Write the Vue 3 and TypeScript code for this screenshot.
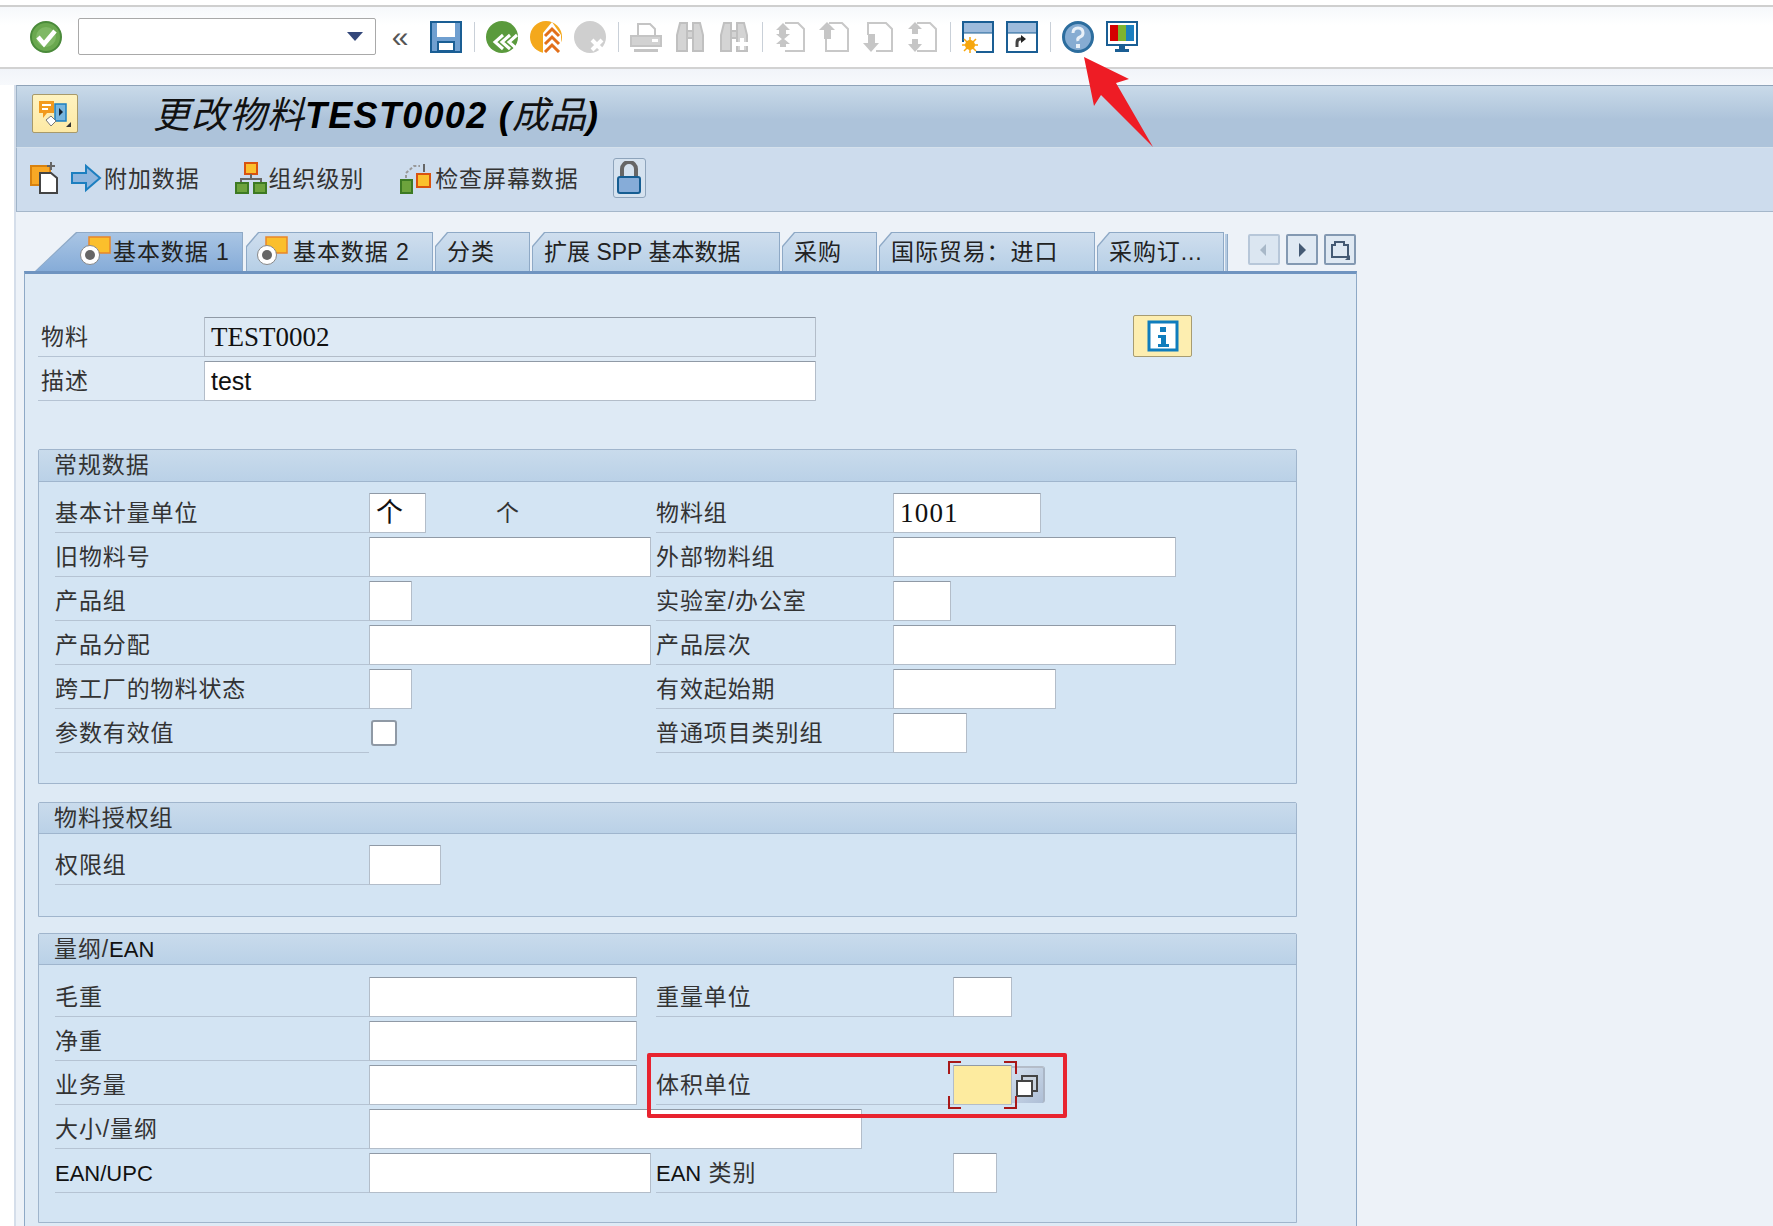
<script setup lang="ts">
interface Tab { text: string; width: number; icon?: boolean; active?: boolean; tight?: boolean }
const tabs: Tab[] = [
  { text: '基本数据 1', width: 208, icon: true, active: true },
  { text: '基本数据 2', width: 187, icon: true },
  { text: '分类', width: 95 },
  { text: '扩展 SPP 基本数据', width: 248, tight: true },
  { text: '采购', width: 95 },
  { text: '国际贸易：进口', width: 216 },
  { text: '采购订...', width: 127 },
]
interface Row { label: string; w: number; value?: string; rlabel: string; rw: number; rvalue?: string; extra?: string; check?: boolean }
const generalRows: Row[] = [
  { label: '基本计量单位', w: 57, value: '个', extra: '个', rlabel: '物料组', rw: 148, rvalue: '1001' },
  { label: '旧物料号', w: 282, rlabel: '外部物料组', rw: 283 },
  { label: '产品组', w: 43, rlabel: '实验室/办公室', rw: 58 },
  { label: '产品分配', w: 282, rlabel: '产品层次', rw: 283 },
  { label: '跨工厂的物料状态', w: 43, rlabel: '有效起始期', rw: 163 },
  { label: '参数有效值', w: 0, check: true, rlabel: '普通项目类别组', rw: 74 },
]
</script>

<template>
  <div class="page">
    <header class="sysbar">
      <svg class="ic" viewBox="0 0 32 32"><circle cx="16" cy="16" r="15" fill="#6aa84f" stroke="#4a8a3a" stroke-width="2"/><circle cx="16" cy="16" r="10" fill="#7fb865"/><path d="M8 16l6 7 11-13" fill="none" stroke="#fff" stroke-width="4.5"/></svg>
      <div class="combo"><span class="combo-arrow"></span></div>
      <span class="chev">«</span>
      <svg class="ic" viewBox="0 0 32 32"><rect x="1" y="1" width="30" height="30" fill="#6f9fd0" stroke="#1a5e94" stroke-width="2"/><rect x="7" y="2" width="18" height="14" fill="#fff"/><rect x="8" y="21" width="16" height="9" fill="#fff" stroke="#1a5e94" stroke-width="2"/></svg>
      <i class="sep"></i>
      <svg class="ic" viewBox="0 0 32 32"><circle cx="16" cy="16" r="16" fill="#5a9a3c"/><path d="M31 14l-8 7 8 7M24 14l-8 7 8 7M17 14l-8 7 8 7" fill="none" stroke="#fff" stroke-width="3"/></svg>
      <svg class="ic" viewBox="0 0 32 32"><circle cx="16" cy="16" r="16" fill="#f4a81c"/><path d="M22 1l9 13v18H13V12z" fill="#fff"/><path d="M15 15l7-7 7 7M15 23l7-7 7 7M15 31l7-7 7 7" fill="none" stroke="#e2701a" stroke-width="3"/></svg>
      <svg class="ic" viewBox="0 0 32 32"><circle cx="16" cy="16" r="16" fill="#cfcfcf"/><path d="M18 19l10 10M28 19L18 29" stroke="#fff" stroke-width="4"/></svg>
      <i class="sep"></i>
      <svg class="ic" viewBox="0 0 32 32" fill="none" stroke="#c4c4c4" stroke-width="2"><path d="M8 14V3h12l5 5v6"/><rect x="1" y="15" width="30" height="10" fill="#d2d2d2"/><rect x="22" y="18" width="6" height="3" fill="#fff" stroke="none"/><rect x="4" y="28" width="24" height="3" fill="#c4c4c4" stroke="none"/></svg>
      <svg class="ic" viewBox="0 0 32 32" fill="#d4d4d4" stroke="#c0c0c0" stroke-width="2"><path d="M6 2h7v28H3V14zM19 2h7l3 12v16H19z"/><rect x="13" y="10" width="6" height="7"/></svg>
      <svg class="ic" viewBox="0 0 32 32" fill="#d4d4d4" stroke="#c0c0c0" stroke-width="2"><path d="M6 2h7v28H3V14zM19 2h7l3 12v16H19z"/><rect x="13" y="10" width="6" height="7"/><path d="M24 17v12M18 23h12" stroke="#fff" stroke-width="4"/></svg>
      <i class="sep"></i>
      <svg class="ic" viewBox="0 0 32 32"><path d="M11 2h13l6 6v22H11" fill="#fff" stroke="#c8c8c8" stroke-width="2"/><path d="M9 2l7 7h-4v4h4l-7 6-7-6h3V9H2zM9 17l7 6h-4v3h-6v-3H2z" fill="#c6c6c6"/></svg>
      <svg class="ic" viewBox="0 0 32 32"><path d="M11 2h13l6 6v22H8V18" fill="#fff" stroke="#c8c8c8" stroke-width="2"/><path d="M9 1l8 8h-4v9H6V9H1z" fill="#c6c6c6"/></svg>
      <svg class="ic" viewBox="0 0 32 32"><path d="M6 14V2h18l6 6v22H14" fill="#fff" stroke="#c8c8c8" stroke-width="2"/><path d="M6 13h7v9h4l-8 9-8-9h5z" fill="#c6c6c6"/></svg>
      <svg class="ic" viewBox="0 0 32 32"><path d="M11 2h13l6 6v22H11" fill="#fff" stroke="#c8c8c8" stroke-width="2"/><path d="M9 1l7 7h-4v5H6V8H2zM6 18h6v5h4l-7 8-7-8h4z" fill="#c6c6c6"/></svg>
      <i class="sep"></i>
      <svg class="ic" viewBox="0 0 32 32"><rect x="1" y="1" width="30" height="30" fill="#fff"/><rect x="1" y="1" width="30" height="11" fill="#9dbbdc"/><path d="M14 31h17V1H1v20" fill="none" stroke="#1a5e94" stroke-width="2"/><path d="M1 12h30" stroke="#1a5e94"/><circle cx="8" cy="24" r="5" fill="#f7a70d"/><path d="M8 16v16M0 24h16M2 18l12 12M14 18L2 30" stroke="#f7a70d" stroke-width="1.5"/></svg>
      <svg class="ic" viewBox="0 0 32 32"><rect x="1" y="1" width="30" height="30" fill="#fff" stroke="#1a5e94" stroke-width="2"/><rect x="2" y="2" width="28" height="10" fill="#9dbbdc"/><path d="M1 12h30" stroke="#1a5e94"/><path d="M11 26v-4q0-4 3-4h2" fill="none" stroke="#444" stroke-width="3"/><path d="M15 14l5 4-5 4z" fill="#222"/></svg>
      <i class="sep"></i>
      <svg class="ic" viewBox="0 0 32 32"><circle cx="16" cy="16" r="14.5" fill="#86acd2" stroke="#2c6d9e" stroke-width="3"/><path d="M11 12q0-5 5-5t5 5q0 3-3 4t-2 4" fill="none" stroke="#e8f0f8" stroke-width="3"/><rect x="14" y="23" width="4" height="4" fill="#e8f0f8"/></svg>
      <svg class="ic" viewBox="0 0 32 32"><rect x="1" y="1" width="30" height="23" fill="#fff" stroke="#1a5e94" stroke-width="2"/><rect x="4" y="4" width="8" height="16" fill="#d40000"/><rect x="12" y="4" width="8" height="16" fill="#7eb32f"/><rect x="20" y="4" width="8" height="16" fill="#1c7fc0"/><path d="M13 25h6v3h4v3H9v-3h4z" fill="#1a5e94"/></svg>
    </header>
    <div class="strip"></div>

    <main class="content">
      <section class="titlebar">
        <div class="title-btn">
          <svg viewBox="0 0 34 30" width="34" height="30"><path d="M1 2h15v12h-7l-4 5v-5H1z" fill="#f29a1e"/><path d="M4 6h9M4 10h6" stroke="#fff" stroke-width="2"/><rect x="17" y="5" width="11" height="17" fill="#77b5de" stroke="#1c7fc0" stroke-width="1.5"/><path d="M21 9l4 4-4 4z" fill="#123"/><path d="M8 21l5-4 5 5-5 5z" fill="#fff" stroke="#777"/><path d="M28 28h5v-5z" fill="#333"/></svg>
        </div>
        <h1 class="title"><span class="title-cjk">更改物料</span><span class="title-lat">TEST0002 (</span><span class="title-cjk tight">成品</span><span class="title-lat">)</span></h1>
      </section>

      <nav class="appbar">
        <svg class="ic ic-a" viewBox="0 0 30 32"><rect x="1" y="4" width="19" height="19" fill="#f9a825" stroke="#d9820f" stroke-width="2"/><path d="M10 11h11l6 5v15H10z" fill="#fff" stroke="#444" stroke-width="2"/><path d="M21 0v8M17 4h8" stroke="#666" stroke-width="2"/></svg>
        <svg class="ic ic-b" viewBox="0 0 30 32"><path d="M1 11h14V4l14 12-14 12v-7H1z" fill="#8fb5dd" stroke="#1c7fc0" stroke-width="2"/></svg>
        <span class="btn-text">附加数据</span>
        <svg class="ic ic-c" viewBox="0 0 32 32"><rect x="10" y="1" width="12" height="11" fill="#fbc02d" stroke="#d9530f" stroke-width="2"/><path d="M16 12v5M6 21v-4h20v4" fill="none" stroke="#666" stroke-width="2"/><rect x="1" y="21" width="12" height="10" fill="#6da33c" stroke="#3d7a23" stroke-width="2"/><rect x="19" y="21" width="12" height="10" fill="#6da33c" stroke="#3d7a23" stroke-width="2"/></svg>
        <span class="btn-text">组织级别</span>
        <svg class="ic ic-d" viewBox="0 0 32 32"><rect x="1" y="18" width="11" height="13" fill="#6da33c" stroke="#3d7a23" stroke-width="2"/><rect x="17" y="12" width="13" height="13" fill="#fbc02d" stroke="#d9530f" stroke-width="2"/><path d="M6 16v-5l8-7h6" fill="none" stroke="#999" stroke-width="2" stroke-dasharray="3 2"/><path d="M24 10V2" stroke="#666" stroke-width="2"/></svg>
        <span class="btn-text t3">检查屏幕数据</span>
        <button class="lock-btn" type="button">
          <svg viewBox="0 0 26 34" width="26" height="34"><path d="M6 16V8a7 7 0 0 1 14 0v8" fill="none" stroke="#666" stroke-width="4"/><rect x="2" y="16" width="22" height="16" rx="2" fill="#86acd8" stroke="#155d92" stroke-width="2"/></svg>
        </button>
      </nav>

      <section class="tabzone">
        <div class="tabstrip">
          <div v-for="t in tabs" :key="t.text" class="tab" :class="{ active: t.active, plain: !t.icon, tight: t.tight }" :style="{ width: t.width + 'px' }">
            <svg v-if="t.icon" class="tab-ic" viewBox="0 0 31 30" width="31" height="30"><rect x="9" y="1" width="21" height="16" fill="#fbbf2c" stroke="#e9862a" stroke-width="1.5"/><circle cx="10" cy="19" r="9.5" fill="#fff" stroke="#888"/><circle cx="10" cy="19" r="5" fill="#666"/></svg>
            <span class="tab-text">{{ t.text }}</span>
          </div>
          <i class="tab-stack"></i>
          <div class="tabnav">
            <button class="navbtn off" type="button"><svg viewBox="0 0 26 26" width="26" height="26"><path d="M15 7l-6 6 6 6z" fill="#a8b8c8"/></svg></button>
            <button class="navbtn" type="button"><svg viewBox="0 0 26 26" width="26" height="26"><path d="M10 6l7 7-7 7z" fill="#445a74"/></svg></button>
            <button class="navbtn" type="button"><svg viewBox="0 0 26 26" width="26" height="26"><path d="M5 8h3V5h9v3h4v12H5z" fill="none" stroke="#445a74" stroke-width="2"/><path d="M23 18v5h-5z" fill="#445a74"/></svg></button>
          </div>
        </div>

        <div class="panel">
          <div class="head-block">
            <div class="head-rows">
              <div class="hrow"><span class="hlabel">物料</span><div class="field ro ser wide">TEST0002</div></div>
              <div class="hrow"><span class="hlabel">描述</span><div class="field sans wide">test</div></div>
            </div>
            <button class="info" type="button"><svg viewBox="0 0 32 32" width="32" height="32"><rect x="2" y="2" width="28" height="28" fill="#fff" stroke="#0f7dbd" stroke-width="3"/><rect x="13" y="7" width="6" height="5" fill="#0f7dbd"/><path d="M11 15h8v9h3v3H11v-3h3v-6h-3z" fill="#0f7dbd"/></svg></button>
          </div>

          <section class="group g1">
            <h2 class="ghead">常规数据</h2>
            <div class="gbody">
              <div v-for="r in generalRows" :key="r.label" class="row">
                <div class="lcell">
                  <span class="label">{{ r.label }}</span>
                  <span v-if="r.check" class="check"></span>
                  <div v-else class="field" :class="{ big: r.value }" :style="{ width: r.w + 'px' }">{{ r.value }}</div>
                  <span v-if="r.extra" class="extra">{{ r.extra }}</span>
                </div>
                <div class="rcell">
                  <span class="label rlabel">{{ r.rlabel }}</span>
                  <div class="field ser num" :style="{ width: r.rw + 'px' }">{{ r.rvalue }}</div>
                </div>
              </div>
            </div>
          </section>

          <section class="group g2">
            <h2 class="ghead">物料授权组</h2>
            <div class="gbody">
              <div class="row"><div class="lcell"><span class="label">权限组</span><div class="field w72"></div></div></div>
            </div>
          </section>

          <section class="group g3">
            <h2 class="ghead">量纲/<span class="lat">EAN</span></h2>
            <div class="gbody">
              <div class="row">
                <div class="lcell"><span class="label">毛重</span><div class="field w268"></div></div>
                <div class="rcell"><span class="label rlabel2">重量单位</span><div class="field w59"></div></div>
              </div>
              <div class="row"><div class="lcell"><span class="label">净重</span><div class="field w268"></div></div></div>
              <div class="row">
                <div class="lcell"><span class="label">业务量</span><div class="field w268"></div></div>
                <div class="rcell"><span class="label rlabel2">体积单位</span>
                  <div class="focus">
                    <div class="field yellow"></div>
                    <i class="br tl"></i><i class="br tr"></i><i class="br bl"></i><i class="br brr"></i>
                  </div>
                  <div class="f4"><svg viewBox="0 0 24 24" width="24" height="24"><rect x="7" y="2" width="15" height="15" fill="#c8d2de" stroke="#444" stroke-width="2"/><rect x="2" y="7" width="15" height="15" fill="#fff" stroke="#444" stroke-width="2"/></svg></div>
                </div>
              </div>
              <div class="row"><div class="lcell"><span class="label">大小/量纲</span><div class="field w493"></div></div></div>
              <div class="row">
                <div class="lcell"><span class="label"><span class="lat">EAN/UPC</span></span><div class="field w282"></div></div>
                <div class="rcell"><span class="label rlabel2"><span class="lat">EAN</span> 类别</span><div class="field w44"></div></div>
              </div>
            </div>
          </section>
        </div>
      </section>
    </main>

    <div class="redbox"></div>
    <svg class="arrow" viewBox="0 0 1773 1226" width="1773" height="1226"><path d="M1084 57L1129 79 1116 83 1153 147 1101 95 1094 106z" fill="#ee1c25"/></svg>
  </div>
</template>

<style scoped>
.page {
  position: relative;
  width: 1773px;
  height: 1226px;
  overflow: hidden;
  background: #fff;
  color: #333;
  font-family: "Liberation Sans", "Noto Sans CJK SC", sans-serif;
  font-size: 23px;
}
.ic { width: 32px; height: 32px; flex: none; }
.sysbar {
  margin-top: 5px;
  height: 60px;
  box-sizing: content-box;
  border-top: 2px solid #cfcfcf;
  border-bottom: 2px solid #d2d2d2;
  background: linear-gradient(#f6f8fb, #fff 30%);
  display: flex;
  align-items: center;
  padding-left: 30px;
  gap: 12px;
}
.combo {
  width: 296px;
  height: 35px;
  margin-left: 4px;
  margin-top: -1px;
  background: #fff;
  border: 1px solid #a9a9a9;
  border-radius: 2px;
  position: relative;
}
.combo-arrow {
  position: absolute;
  right: 12px;
  top: 13px;
  border: 8px solid transparent;
  border-top: 9px solid #33477a;
  border-bottom: 0;
}
.chev { width: 26px; margin: 0 5px 0 -1px; text-align: center; font-size: 30px; line-height: 30px; color: #555; }
.sep { width: 1px; height: 30px; background: #c9d0d8; margin: 0 -1px 0 0; flex: none; }
.strip { height: 16px; background: linear-gradient(#f1f4f9, #f7f9fc); }

.content {
  margin-left: 14px;
  background: #edf2f8;
  border-left: 2px solid #d5deea;
  height: 1144px;
}
.titlebar {
  height: 61px;
  border-top: 1px solid #8fa3b8;
  background: linear-gradient(#c9dae9, #adc3da 55%);
  border-bottom: 1px solid #d5e1ec;
  display: flex;
  align-items: center;
  padding-left: 15px;
  border-left: 1px solid #9fb3c8;
}
.title-btn {
  width: 44px;
  height: 37px;
  border: 1px solid #a89a6a;
  border-radius: 2px;
  background: linear-gradient(#fff3c0, #fde9a5);
  display: flex;
  align-items: center;
  justify-content: center;
  margin-top: -6px;
}
.title {
  margin: -1px 0 0 75px;
  font-size: 37px;
  font-weight: 400;
  font-style: italic;
  color: #111;
  line-height: 50px;
  white-space: nowrap;
}
.title-cjk { letter-spacing: 1px; }
.title-cjk.tight { letter-spacing: 0; }
.title-lat { font-weight: 700; color: #000; font-size: 36px; letter-spacing: 1.3px; }

.appbar {
  height: 64px;
  padding-bottom: 4px;
  box-sizing: border-box;
  background: #cddced;
  border-bottom: 1px solid #a5b7ca;
  border-left: 1px solid #9fb3c8;
  display: flex;
  align-items: center;
}
.ic-a { margin-left: 12px; }
.ic-b { margin-left: 9px; }
.ic-c { margin-left: 35px; }
.ic-d { margin-left: 36px; }
.btn-text { margin: -2px 0 0 2px; letter-spacing: 0.9px; white-space: nowrap; }
.t3 { margin-left: 3px; }
.lock-btn {
  margin-left: 34px;
  width: 33px;
  height: 40px;
  padding: 0;
  border: 1px solid #8ea4bb;
  border-radius: 3px;
  background: #d5e2ef;
  display: flex;
  align-items: center;
  justify-content: center;
}

.tabzone { padding: 20px 0 0 7px; }
.tabstrip {
  display: flex;
  align-items: flex-end;
  gap: 2px;
  margin-left: 12px;
  width: 1321px;
  height: 39px;
}
.tab {
  position: relative;
  height: 39px;
  background: #8ea9c6;
  clip-path: polygon(12px 0, 100% 0, 100% 100%, 0 100%, 0 14px);
  display: flex;
  align-items: center;
  padding-left: 13px;
  box-sizing: border-box;
  white-space: nowrap;
  flex: none;
}
.tab::before {
  content: "";
  position: absolute;
  inset: 1px 1px 0 1px;
  background: linear-gradient(#cfdeee, #b6cfe6);
  clip-path: polygon(12px 0, 100% 0, 100% 100%, 0 100%, 0 14px);
}
.tab.active { clip-path: polygon(41px 0, 100% 0, 100% 100%, 0 100%); padding-left: 45px; margin-right: 1px; }
.tab.active::before { background: linear-gradient(#a9c5e4, #86acd8); clip-path: polygon(41px 0, 100% 0, 100% 100%, 0 100%); }
.tab-ic { position: relative; flex: none; margin-right: 2px; margin-top: -2px; }
.tab:not(.active):not(.plain) { padding-left: 11px; }
.tab:not(.active):not(.plain) .tab-ic { margin-right: 5px; }
.tab.plain { padding-left: 12px; }
.tab-text { position: relative; letter-spacing: 0.9px; color: #222; line-height: 34px; margin-top: 1px; }
.tab.tight .tab-text { letter-spacing: 0; }
.tab-stack { width: 2px; height: 37px; margin-left: -1px; background: #b5cbe2; border-right: 1px solid #8ea9c6; flex: none; }
.tabnav { margin-left: auto; display: flex; gap: 6px; align-self: flex-start; padding-top: 2px; }
.navbtn {
  width: 32px;
  height: 31px;
  padding: 0;
  border: 2px solid #8399b2;
  border-radius: 2px;
  background: #dfe9f3;
  display: flex;
  align-items: center;
  justify-content: center;
}
.navbtn.off { border-color: #b7c7d9; background: #dbe6f1; }

.panel {
  margin-left: 1px;
  width: 1333px;
  height: 960px;
  box-sizing: border-box;
  border: 1px solid #8ea9c6;
  border-top: 3px solid #6f94c0;
  background: #deeaf5;
  padding: 43px 0 0 13px;
}
.head-block { display: flex; align-items: flex-start; }
.head-rows { display: flex; flex-direction: column; gap: 4px; }
.hrow { display: flex; }
.hlabel {
  height: 39px;
  line-height: 40px;
  padding-left: 3px;
  box-sizing: content-box;
  width: 163px;
  border-bottom: 1px solid #b5c3d3;
  letter-spacing: 0.9px;
}
.field {
  height: 40px;
  box-sizing: border-box;
  background: #fff;
  border: 1px solid #b3bdc9;
  border-top-color: #909aa6;
  border-radius: 1px;
  flex: none;
  padding-left: 6px;
  line-height: 38px;
  color: #111;
}
.wide { width: 612px; }
.ro { background: #deeaf5; }
.ser { font-family: "Liberation Serif", serif; font-size: 27px; }
.num { letter-spacing: 1.2px; }
.sans { font-size: 25px; }
.big { font-size: 27px; }
.info {
  margin: -2px 0 0 317px;
  width: 59px;
  height: 42px;
  padding: 0;
  border: 1px solid #a79c72;
  border-radius: 2px;
  background: #fdeeb0;
  display: flex;
  align-items: center;
  justify-content: center;
}

.group {
  width: 1259px;
  box-sizing: border-box;
  border: 1px solid #a0b5cc;
  border-radius: 2px 2px 0 0;
  background: #d3e4f3;
}
.g1 { margin-top: 48px; height: 335px; }
.g2 { margin-top: 18px; height: 115px; }
.g3 { margin-top: 16px; height: 290px; }
.ghead {
  margin: 0;
  height: 32px;
  box-sizing: border-box;
  padding-left: 15px;
  font-size: 23px;
  font-weight: 400;
  line-height: 30px;
  letter-spacing: 0.9px;
  background: linear-gradient(#c9dbec, #bad1e7);
  border-bottom: 1px solid #9fb5cd;
}
.g2 .ghead, .g3 .ghead { height: 31px; }
.gbody { padding: 11px 0 0 16px; display: flex; flex-direction: column; gap: 4.1px; }
.g3 .gbody { padding-top: 12px; }
.row { display: flex; height: 40px; margin-left: -1px; padding-left: 1px; }
.lcell { width: 601px; display: flex; flex: none; position: relative; }
.rcell { display: flex; }
.label {
  width: 314px;
  height: 40px;
  box-sizing: border-box;
  border-bottom: 1px solid #b5c3d3;
  line-height: 40px;
  letter-spacing: 0.9px;
  flex: none;
  white-space: nowrap;
}
.rlabel { width: 237px; }
.rlabel2 { width: 297px; }
.lat { letter-spacing: 0; color: #111; font-size: 22px; }
.extra { position: absolute; left: 441px; top: 0; line-height: 40px; }
.check {
  width: 22px;
  height: 22px;
  margin: 7px 0 0 2px;
  background: #fff;
  border: 2px solid #8f99a5;
  border-radius: 3px;
  box-sizing: content-box;
  flex: none;
}
.w72 { width: 72px; }
.w268 { width: 268px; }
.w59 { width: 59px; }
.w493 { width: 493px; }
.w282 { width: 282px; }
.w44 { width: 44px; }
.focus { position: relative; width: 59px; height: 40px; flex: none; }
.yellow { width: 59px; background: #fdeb9f; }
.br { position: absolute; width: 11px; height: 11px; border: 0 solid #a81818; }
.tl { left: -5px; top: -4px; border-width: 2px 0 0 2px; }
.tr { right: -5px; top: -4px; border-width: 2px 2px 0 0; }
.bl { left: -5px; bottom: -4px; border-width: 0 0 2px 2px; }
.brr { right: -5px; bottom: -4px; border-width: 0 2px 2px 0; }
.f4 {
  width: 33px;
  height: 37px;
  margin-top: 1px;
  border-radius: 0 3px 3px 0;
  background: linear-gradient(135deg, #d3e0ee, #aebfd6);
  border-right: 2px solid #aab6c6;
  border-top: 2px solid #b4bcc8;
  box-sizing: border-box;
  padding: 6px 0 0 3px;
}
.f4 svg { display: block; }

.redbox {
  position: absolute;
  left: 647px;
  top: 1053px;
  width: 420px;
  height: 65px;
  box-sizing: border-box;
  border: 4px solid #e8232f;
  border-radius: 2px;
  pointer-events: none;
}
.arrow { position: absolute; left: 0; top: 0; pointer-events: none; }
</style>
